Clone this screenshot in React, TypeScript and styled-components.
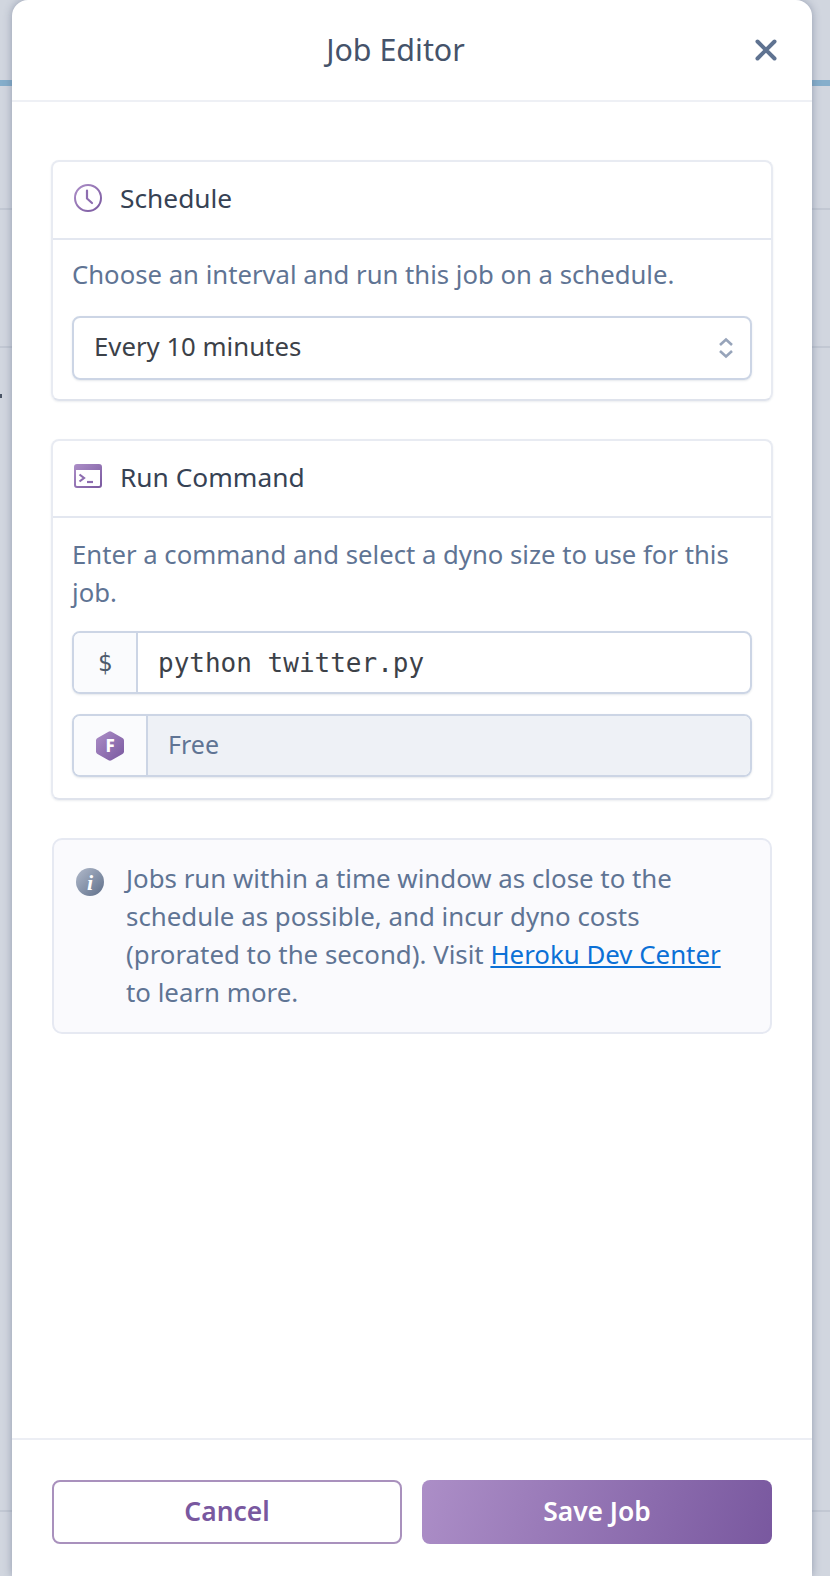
import React from "react";
import styled, { createGlobalStyle } from "styled-components";

const Global = createGlobalStyle`
  html, body { margin: 0; padding: 0; }
  body { font-family: "Noto Sans", "Open Sans", sans-serif; }
  * { box-sizing: border-box; }
`;

const Page = styled.div`
  width: 830px;
  height: 1576px;
  overflow: hidden;
  padding-left: 12px;
  background:
    linear-gradient(#85aecb, #85aecb) 0 80px / 100% 6px no-repeat,
    linear-gradient(#c2c8d3, #c2c8d3) 0 208px / 100% 2px no-repeat,
    linear-gradient(#c2c8d3, #c2c8d3) 0 346px / 100% 2px no-repeat,
    linear-gradient(#c2c8d3, #c2c8d3) 0 1510px / 100% 2px no-repeat,
    linear-gradient(#4a5566, #4a5566) 0 394px / 2px 4px no-repeat,
    #d1d6df;
`;

const Modal = styled.div`
  width: 800px;
  height: 1576px;
  background: #fff;
  border-radius: 16px 16px 0 0;
  box-shadow: 0 0 8px rgba(70, 85, 115, 0.45);
  display: flex;
  flex-direction: column;
`;

const Header = styled.header`
  height: 102px;
  flex: none;
  border-bottom: 2px solid #eef0f5;
  display: grid;
  grid-template-columns: 1fr auto 1fr;
  align-items: center;
  padding: 0 35px 2px 0;
`;

const Title = styled.h1`
  grid-column: 2;
  margin: 2px 0 0 2px;
  font-size: 30.4px;
  font-weight: 400;
  color: #45536a;
  line-height: 38px;
`;

const CloseButton = styled.button`
  grid-column: 3;
  justify-self: end;
  width: 22px;
  height: 22px;
  margin-top: 2px;
  padding: 0;
  border: 0;
  background: none;
  display: flex;
`;

const Body = styled.main`
  flex: 1;
  padding: 58px 39px 0;
  display: flex;
  flex-direction: column;
`;

const Card = styled.section<{ $bottom: number }>`
  border: 2px solid #e8ebf2;
  border-bottom-color: #dfe3ec;
  border-radius: 8px;
  box-shadow: 0 1px 2px rgba(89, 105, 129, 0.12);
  margin-bottom: ${(p) => p.$bottom}px;
`;

const CardHead = styled.div<{ $height: number }>`
  height: ${(p) => p.$height}px;
  border-bottom: 2px solid #e3e7f0;
  display: flex;
  align-items: center;
  gap: 18px;
  padding: 0 0 5px 21px;
`;

const CardTitle = styled.h2`
  margin: 1px 0 0;
  font-size: 26.3px;
  font-weight: 400;
  color: #364254;
  line-height: 38px;
`;

const CardBody = styled.div<{ $top: number; $bottom: number }>`
  padding: ${(p) => p.$top}px 19px ${(p) => p.$bottom}px;
  display: flex;
  flex-direction: column;
  gap: 20px;
`;

const Lead = styled.p<{ $shift: number }>`
  margin: ${(p) => p.$shift}px 0 ${(p) => -p.$shift}px;
  font-size: 25.7px;
  line-height: 38px;
  color: #5f7494;
`;

const Field = styled.div<{ $height: number }>`
  height: ${(p) => p.$height}px;
  border: 2px solid #ccd5e5;
  border-radius: 8px;
  box-shadow: 0 1px 2px rgba(89, 105, 129, 0.15);
  display: flex;
  align-items: stretch;
  overflow: hidden;
`;

const SelectText = styled.span`
  flex: 1;
  align-self: center;
  padding: 0 0 4px 20px;
  font-size: 25.75px;
  color: #3c4148;
`;

const Chevrons = styled.svg`
  align-self: center;
  margin-right: 16px;
`;

const Addon = styled.div<{ $width: number }>`
  width: ${(p) => p.$width}px;
  flex: none;
  background: #fafbfd;
  border-right: 2px solid #ccd5e5;
  display: flex;
  align-items: center;
  justify-content: center;
  color: #4d5a6c;
  font-family: "DejaVu Sans Mono", monospace;
  font-size: 24px;
`;

const Command = styled.span`
  align-self: center;
  padding-left: 20px;
  font-family: "DejaVu Sans Mono", monospace;
  font-size: 26px;
  color: #3c4148;
`;

const Disabled = styled.span`
  flex: 1;
  background: #eef1f6;
  display: flex;
  align-items: center;
  padding: 0 0 4px 20px;
  font-size: 25px;
  color: #5f7494;
`;

const Notice = styled.aside`
  margin: 0 1px;
  height: 196px;
  padding: 19px 40px 0 22px;
  background: #fafafd;
  border: 2px solid #e6e9f2;
  border-radius: 10px;
  display: flex;
  gap: 22px;
`;

const InfoIcon = styled.svg`
  flex: none;
  margin-top: 9px;
`;

const NoticeText = styled.p`
  margin: 0;
  font-size: 25.85px;
  line-height: 38px;
  color: #5f7494;
`;

const Link = styled.a`
  color: #0b70d6;
  text-decoration: underline;
`;

const Footer = styled.footer`
  height: 138px;
  flex: none;
  border-top: 2px solid #eceef4;
  padding: 40px 40px 0;
  display: grid;
  grid-template-columns: 350px 350px;
  gap: 20px;
  align-items: start;
`;

const Button = styled.button<{ $primary?: boolean }>`
  height: 64px;
  padding: 0 0 2px;
  border-radius: 8px;
  font-family: inherit;
  font-size: 26.4px;
  font-weight: 600;
  color: ${(p) => (p.$primary ? "#fff" : "#79589f")};
  background: ${(p) => (p.$primary ? "linear-gradient(105deg, #ac8ec7, #79589f)" : "#fff")};
  border: ${(p) => (p.$primary ? "0" : "2px solid #a991bd")};
`;

const PurpleDefs = ({ id }: { id: string }) => (
  <defs>
    <linearGradient id={id} x1="0" y1="0" x2="1" y2="1">
      <stop offset="0" stopColor="#ac8ec7" />
      <stop offset="1" stopColor="#79589f" />
    </linearGradient>
  </defs>
);

const ClockIcon = () => (
  <svg width="28" height="28" viewBox="0 0 28 28" fill="none">
    <PurpleDefs id="clockGrad" />
    <circle cx="14" cy="14" r="13" stroke="url(#clockGrad)" strokeWidth="2" />
    <path d="M13 6.500v8l5 4.500" stroke="#8d6db0" strokeWidth="2.200" strokeLinecap="round" strokeLinejoin="round" />
  </svg>
);

const TerminalIcon = () => (
  <svg width="28" height="24" viewBox="0 0 28 24" fill="none">
    <PurpleDefs id="termGrad" />
    <path
      fillRule="evenodd"
      d="M3 0h22a3 3 0 0 1 3 3v18a3 3 0 0 1-3 3H3a3 3 0 0 1-3-3V3a3 3 0 0 1 3-3zM2 6v15a1 1 0 0 0 1 1h22a1 1 0 0 0 1-1V6z"
      fill="url(#termGrad)"
    />
    <path d="M5.500 10.500l4.500 3.500-4.500 3.500" stroke="#8d6db0" strokeWidth="2.200" />
    <path d="M13 18h6" stroke="#8d6db0" strokeWidth="2.200" />
  </svg>
);

const FreeIcon = () => (
  <svg width="28" height="30" viewBox="0 0 28 30">
    <PurpleDefs id="freeGrad" />
    <path
      d="M12.500.7a3 3 0 0 1 3 0l11 6.300a3 3 0 0 1 1.500 2.600v10.800a3 3 0 0 1-1.500 2.600l-11 6.300a3 3 0 0 1-3 0l-11-6.300A3 3 0 0 1 0 20.400V9.600A3 3 0 0 1 1.500 7z"
      fill="url(#freeGrad)"
    />
    <text x="14" y="21" textAnchor="middle" fontFamily="Noto Sans, sans-serif" fontWeight="800" fontSize="17" fill="#fff">
      F
    </text>
  </svg>
);

const Info = () => (
  <InfoIcon width="28" height="28" viewBox="0 0 28 28">
    <defs>
      <linearGradient id="infoGrad" x1="0" y1="0" x2="1" y2="1">
        <stop offset="0" stopColor="#b1bacb" />
        <stop offset="1" stopColor="#5f6f8a" />
      </linearGradient>
    </defs>
    <circle cx="14" cy="14" r="14" fill="url(#infoGrad)" />
    <text x="14" y="22" textAnchor="middle" fontFamily="Liberation Serif, serif" fontStyle="italic" fontWeight="700" fontSize="22" fill="#fff">
      i
    </text>
  </InfoIcon>
);

export default function App() {
  return (
    <Page>
      <Global />
      <Modal>
        <Header>
          <Title>Job Editor</Title>
          <CloseButton aria-label="Close">
            <svg width="22" height="22" viewBox="0 0 22 22" fill="none">
              <path d="M2.500 2.500l17 17M19.500 2.500l-17 17" stroke="#5f7391" strokeWidth="4" strokeLinecap="round" />
            </svg>
          </CloseButton>
        </Header>
        <Body>
          <Card $bottom={38}>
            <CardHead $height={78}>
              <ClockIcon />
              <CardTitle>Schedule</CardTitle>
            </CardHead>
            <CardBody $top={18} $bottom={19}>
              <Lead $shift={-2}>Choose an interval and run this job on a schedule.</Lead>
              <Field $height={64}>
                <SelectText>Every 10 minutes</SelectText>
                <Chevrons width="16" height="22" viewBox="0 0 16 22" fill="none">
                  <path d="M2 8l6-5.500 6 5.500M2 14l6 5.500 6-5.500" stroke="#97a4ba" strokeWidth="2.600" />
                </Chevrons>
              </Field>
            </CardBody>
          </Card>
          <Card $bottom={38}>
            <CardHead $height={77}>
              <TerminalIcon />
              <CardTitle>Run Command</CardTitle>
            </CardHead>
            <CardBody $top={17} $bottom={21}>
              <Lead $shift={1}>Enter a command and select a dyno size to use for this job.</Lead>
              <Field $height={63}>
                <Addon $width={64}>$</Addon>
                <Command>python twitter.py</Command>
              </Field>
              <Field $height={63}>
                <Addon $width={74}>
                  <FreeIcon />
                </Addon>
                <Disabled>Free</Disabled>
              </Field>
            </CardBody>
          </Card>
          <Notice>
            <Info />
            <NoticeText>
              Jobs run within a time window as close to the schedule as possible, and incur dyno costs (prorated to the
              second). Visit <Link href="#">Heroku Dev Center</Link> to learn more.
            </NoticeText>
          </Notice>
        </Body>
        <Footer>
          <Button>Cancel</Button>
          <Button $primary>Save Job</Button>
        </Footer>
      </Modal>
    </Page>
  );
}
